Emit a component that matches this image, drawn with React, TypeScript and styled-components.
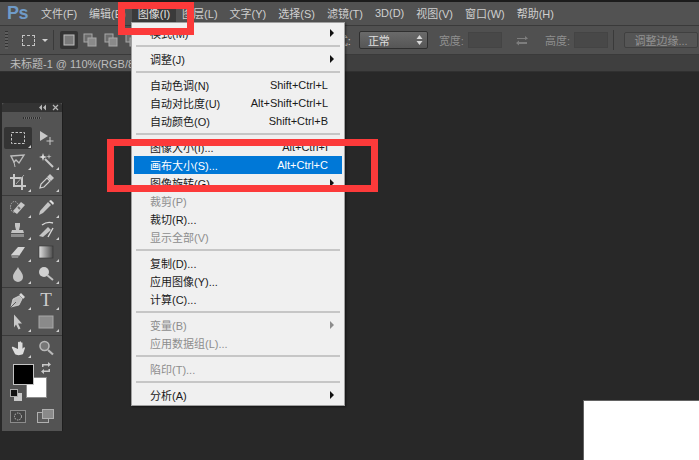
import React from 'react';
import styled, { createGlobalStyle } from 'styled-components';

const UI_FONT = `"Liberation Sans", "Noto Sans CJK SC", sans-serif`;

const GlobalStyle = createGlobalStyle`
  html, body {
    margin: 0;
    padding: 0;
    background: #282828;
  }
  * {
    box-sizing: border-box;
  }
`;

const menuBarItems = [
  { label: '文件(F)' },
  { label: '编辑(E)' },
  { label: '图像(I)', active: true },
  { label: '图层(L)' },
  { label: '文字(Y)' },
  { label: '选择(S)' },
  { label: '滤镜(T)' },
  { label: '3D(D)' },
  { label: '视图(V)' },
  { label: '窗口(W)' },
  { label: '帮助(H)' },
];

type Item = {
  label: string;
  shortcut?: string;
  submenu?: boolean;
  disabled?: boolean;
  selected?: boolean;
};

const menuSections: Item[][] = [
  [{ label: '模式(M)', submenu: true }],
  [{ label: '调整(J)', submenu: true }],
  [
    { label: '自动色调(N)', shortcut: 'Shift+Ctrl+L' },
    { label: '自动对比度(U)', shortcut: 'Alt+Shift+Ctrl+L' },
    { label: '自动颜色(O)', shortcut: 'Shift+Ctrl+B' },
  ],
  [
    { label: '图像大小(I)...', shortcut: 'Alt+Ctrl+I' },
    { label: '画布大小(S)...', shortcut: 'Alt+Ctrl+C', selected: true },
    { label: '图像旋转(G)', submenu: true },
    { label: '裁剪(P)', disabled: true },
    { label: '裁切(R)...' },
    { label: '显示全部(V)', disabled: true },
  ],
  [{ label: '复制(D)...' }, { label: '应用图像(Y)...' }, { label: '计算(C)...' }],
  [
    { label: '变量(B)', submenu: true, disabled: true },
    { label: '应用数据组(L)...', disabled: true },
  ],
  [{ label: '陷印(T)...', disabled: true }],
  [{ label: '分析(A)', submenu: true }],
];

const Icon = ({ children, size = 18 }: { children: React.ReactNode; size?: number }) => (
  <svg width={size} height={size} viewBox="0 0 18 18" fill="none">
    {children}
  </svg>
);

const toolGroups: { id: string; corner?: boolean; active?: boolean; icon: React.ReactNode }[][] = [
  [
    {
      id: 'marquee',
      corner: true,
      active: true,
      icon: (
        <Icon>
          <rect x="2.5" y="3.5" width="13" height="11" stroke="#c4c4c4" strokeDasharray="2.5 1.5" />
        </Icon>
      ),
    },
    {
      id: 'move',
      icon: (
        <Icon>
          <path d="M3 2l8 5-8 5z" fill="#c8c8c8" />
          <path d="M13 8v8M9.5 12h7" stroke="#c8c8c8" />
        </Icon>
      ),
    },
    {
      id: 'lasso',
      corner: true,
      icon: (
        <Icon>
          <path d="M2 5l13-1-5 8-3-3-2 2z" stroke="#bdbdbd" strokeWidth="1.4" />
          <path d="M5 11l1 5" stroke="#bdbdbd" />
        </Icon>
      ),
    },
    {
      id: 'wand',
      corner: true,
      icon: (
        <Icon>
          <path d="M8 8l8 8" stroke="#c8c8c8" strokeWidth="2" />
          <path d="M6 2l1 3 3 1-3 1-1 3-1-3-3-1 3-1z" fill="#dcdcdc" />
          <path d="M12 3l.6 2 2 .6-2 .6-.6 2-.6-2-2-.6 2-.6z" fill="#b8b8b8" />
        </Icon>
      ),
    },
    {
      id: 'crop',
      corner: true,
      icon: (
        <Icon>
          <path d="M5 1v12h12M1 5h12v12" stroke="#c8c8c8" strokeWidth="2" />
          <path d="M7 11l8-9" stroke="#a8a8a8" />
        </Icon>
      ),
    },
    {
      id: 'eyedropper',
      corner: true,
      icon: (
        <Icon>
          <path d="M3 15l1-4 6-6 3 3-6 6z" stroke="#d0d0d0" strokeWidth="1.2" />
          <path d="M10 4l3-3 4 4-3 3z" fill="#c8c8c8" />
        </Icon>
      ),
    },
  ],
  [
    {
      id: 'heal',
      corner: true,
      icon: (
        <Icon>
          <ellipse cx="5.5" cy="8" rx="4" ry="5.5" stroke="#b0b0b0" strokeDasharray="1.5 1" />
          <path d="M4 12l8-9 4 3-8 9z" fill="#c8c8c8" />
          <path d="M9 8l2 2" stroke="#6e6e6e" strokeWidth="2" />
        </Icon>
      ),
    },
    {
      id: 'brush',
      corner: true,
      icon: (
        <Icon>
          <path d="M2 16l1-4 8-9 3 3-8 8z" fill="#c4c4c4" />
          <path d="M12 2l2-1 3 3-1 2z" fill="#e0e0e0" />
        </Icon>
      ),
    },
    {
      id: 'stamp',
      corner: true,
      icon: (
        <Icon>
          <path d="M6 2h5v3l-1 4h4l1 3H2l1-3h4l-1-4z" fill="#c4c4c4" />
          <rect x="2" y="13" width="13" height="3" fill="#8e8e8e" />
        </Icon>
      ),
    },
    {
      id: 'history',
      corner: true,
      icon: (
        <Icon>
          <path d="M2 15l9-9 3 3-8 7z" fill="#c4c4c4" />
          <path d="M5 4c4-3 8-3 11-2M16 7l-5 9" stroke="#d8d8d8" strokeWidth="1.4" />
        </Icon>
      ),
    },
    {
      id: 'eraser',
      corner: true,
      icon: (
        <Icon>
          <path d="M2 12l7-8h7l-6 9H3z" fill="#d4d4d4" />
          <path d="M2 12h8l-1 3H3z" fill="#8c8c8c" />
        </Icon>
      ),
    },
    {
      id: 'gradient',
      corner: true,
      icon: (
        <Icon>
          <defs>
            <linearGradient id="grad-tool" x1="0" x2="1" y1="0" y2="0">
              <stop offset="0" stopColor="#e0e0e0" />
              <stop offset="1" stopColor="#4a4a4a" />
            </linearGradient>
          </defs>
          <rect x="2" y="3" width="14" height="12" fill="url(#grad-tool)" stroke="#333" strokeWidth="0.6" />
        </Icon>
      ),
    },
    {
      id: 'blur',
      corner: true,
      icon: (
        <Icon>
          <path d="M9 2c2 4 5 6 5 10a5 5 0 0 1-10 0c0-4 3-6 5-10z" fill="#c4c4c4" />
        </Icon>
      ),
    },
    {
      id: 'dodge',
      corner: true,
      icon: (
        <Icon>
          <circle cx="7" cy="7" r="5" fill="#d0d0d0" />
          <path d="M10 10l6 5" stroke="#c0c0c0" strokeWidth="2" />
        </Icon>
      ),
    },
  ],
  [
    {
      id: 'pen',
      corner: true,
      icon: (
        <Icon>
          <path d="M2 16l2-8 6-3 3 3-3 6z" fill="#bcbcbc" stroke="#e4e4e4" strokeWidth="0.7" />
          <path d="M10 4l2-2 4 4-2 2z" fill="#d8d8d8" />
          <path d="M2 16l5-5" stroke="#5c5c5c" />
        </Icon>
      ),
    },
    { id: 'type', corner: true, icon: null },
    {
      id: 'select',
      corner: true,
      icon: (
        <Icon>
          <path d="M5 1.5l8 9H9l2.5 5-2 1-2.5-5-2 3z" fill="#c8c8c8" />
        </Icon>
      ),
    },
    {
      id: 'shape',
      corner: true,
      icon: (
        <Icon>
          <rect x="2" y="3" width="14" height="12" fill="#8a8a8a" stroke="#a8a8a8" />
        </Icon>
      ),
    },
  ],
  [
    {
      id: 'hand',
      corner: true,
      icon: (
        <Icon>
          <path
            d="M3 9l3 6c1 1.500 6 1.500 8 0l2-6c0-1-1-1-2 0l-.5 1V4c0-1-1.500-1-1.500 0v4V3c0-1-1.500-1-1.500 0v5V3.500c0-1-1.500-1-1.500 0V10L4.500 8C3.500 7.500 2.500 8 3 9z"
            fill="#dcdcdc"
          />
        </Icon>
      ),
    },
    {
      id: 'zoom',
      icon: (
        <Icon>
          <circle cx="7.500" cy="7" r="4.500" fill="#777" stroke="#b8b8b8" strokeWidth="1.6" />
          <path d="M11 11l5 4.500" stroke="#b8b8b8" strokeWidth="2.200" />
        </Icon>
      ),
    },
  ],
];

const App = () => (
  <>
    <GlobalStyle />
    <Window>
      <TopEdge />
      <MenuBar>
        <Logo>Ps</Logo>
        {menuBarItems.map((item) => (
          <MenuBarItem key={item.label} $active={item.active}>
            {item.label}
          </MenuBarItem>
        ))}
      </MenuBar>

      <OptionsBar>
        <Grip />
        <MarqueePreset />
        <PresetArrow />
        <OptionDivider />
        <ModeGroup>
          <ModeButton $active>
            <svg width="12" height="12" viewBox="0 0 12 12">
              <rect x="1" y="1" width="10" height="10" fill="#7a7a7a" stroke="#c0c0c0" />
            </svg>
          </ModeButton>
          {[0, 1, 2].map((i) => (
            <ModeButton key={i}>
              <svg width="14" height="14" viewBox="0 0 14 14">
                <rect x="1" y="1" width="8" height="8" fill="#6c6c6c" stroke="#a8a8a8" />
                <rect x="5" y="5" width="8" height="8" fill="#8a8a8a" stroke="#a8a8a8" />
              </svg>
            </ModeButton>
          ))}
        </ModeGroup>
        <OptionsRight>
          <OptionLabel>样式:</OptionLabel>
          <StyleSelect>
            正常
            <svg width="7" height="12" viewBox="0 0 7 12">
              <path d="M3.500 1l3 4h-6zM3.500 11l3-4h-6z" fill="#d8d8d8" />
            </svg>
          </StyleSelect>
          <DimLabel>宽度:</DimLabel>
          <DimInput />
          <SwapIcon viewBox="0 0 14 12" width="14" height="12">
            <path d="M2 4h8V2l3 2.500L10 6V5H2zM12 8H4V6.500L1 9l3 2.500V10h8z" fill="#7d7d7d" />
          </SwapIcon>
          <DimLabel>高度:</DimLabel>
          <DimInput />
          <OptionDivider />
          <RefineButton>调整边缘...</RefineButton>
        </OptionsRight>
      </OptionsBar>

      <TabBar>
        <DocTab>未标题-1 @ 110%(RGB/8)</DocTab>
      </TabBar>

      <Workspace>
        <Canvas />
        <ToolPanel>
          <PanelHeader>
            <svg width="20" height="7" viewBox="0 0 20 7">
              <path d="M3 0.500L0 3.500l3 3zM7 0.500L4 3.500l3 3z" fill="#b8b8b8" />
              <path d="M14 1l5 5M19 1l-5 5" stroke="#b8b8b8" strokeWidth="1.200" />
            </svg>
          </PanelHeader>
          <PanelGrip />
          {toolGroups.map((group, index) => (
            <ToolGroup key={index} $first={index === 0}>
              {group.map((tool) => (
                <ToolButton key={tool.id} $active={tool.active} $corner={tool.corner}>
                  {tool.id === 'type' ? <TypeGlyph>T</TypeGlyph> : tool.icon}
                </ToolButton>
              ))}
            </ToolGroup>
          ))}
          <Swatches>
            <SwapColors viewBox="0 0 12 12" width="12" height="12">
              <path d="M2 5V2h6V0l3 2.500L8 5V3.500H3.500V5zM10 7v3H4v2L1 9.500 4 7v1.500h4.500V7z" fill="#c8c8c8" />
            </SwapColors>
            <Background />
            <Foreground />
            <DefaultColors>
              <svg width="12" height="12" viewBox="0 0 12 12">
                <rect x="4" y="4" width="8" height="8" fill="#c8c8c8" />
                <rect x="0.500" y="0.500" width="7" height="7" fill="#111" stroke="#aaa" />
              </svg>
            </DefaultColors>
          </Swatches>
          <PanelFooter>
            <svg width="16" height="13" viewBox="0 0 16 13">
              <rect x="0.500" y="0.500" width="15" height="12" fill="#454545" stroke="#8c8c8c" />
              <circle cx="8" cy="6.500" r="3.500" fill="none" stroke="#c0c0c0" strokeDasharray="1.500 1" />
            </svg>
            <svg width="17" height="14" viewBox="0 0 17 14">
              <rect x="0.500" y="3.500" width="11" height="10" fill="#5c5c5c" stroke="#b0b0b0" />
              <rect x="5.500" y="0.500" width="11" height="9" fill="#8a8a8a" stroke="#b0b0b0" />
            </svg>
          </PanelFooter>
        </ToolPanel>
      </Workspace>

      <ImageMenu>
        {menuSections.map((section, index) => (
          <MenuSection key={index} $last={index === menuSections.length - 1}>
            {section.map((item) => (
              <MenuRow key={item.label} $disabled={item.disabled} $selected={item.selected}>
                <span>{item.label}</span>
                {item.shortcut && <span>{item.shortcut}</span>}
                {item.submenu && <SubmenuArrow $disabled={item.disabled} />}
              </MenuRow>
            ))}
          </MenuSection>
        ))}
      </ImageMenu>

      <Highlight $left={118} $top={2} $width={76} $height={33} />
      <Highlight $left={107} $top={139} $width={271} $height={53} />
    </Window>
  </>
);

const Window = styled.div`
  position: relative;
  width: 699px;
  height: 460px;
  overflow: hidden;
  display: flex;
  flex-direction: column;
  background: #282828;
  font-family: ${UI_FONT};
  font-size: 11px;
`;

const TopEdge = styled.div`
  height: 2px;
  background: #1c1c1c;
`;

const MenuBar = styled.div`
  height: 24px;
  display: flex;
  align-items: center;
  padding-left: 7px;
  background: #525252;
  border-bottom: 1px solid #3a3a3a;
`;

const Logo = styled.div`
  width: 28px;
  font-size: 18px;
  font-weight: 700;
  letter-spacing: -0.5px;
  color: #6f9bc8;
`;

const MenuBarItem = styled.div<{ $active?: boolean }>`
  height: 100%;
  display: flex;
  align-items: center;
  padding: 0 6px 2px;
  color: ${({ $active }) => ($active ? '#e0e0e0' : '#cfcfcf')};
  background: ${({ $active }) => ($active ? '#3a3a3a' : 'transparent')};
  white-space: nowrap;
`;

const OptionsBar = styled.div`
  height: 29px;
  display: flex;
  align-items: center;
  padding-left: 5px;
  background: #505050;
  border-bottom: 1px solid #3a3a3a;
`;

const Grip = styled.div`
  width: 3px;
  height: 18px;
  background: repeating-linear-gradient(#333 0 1px, #5e5e5e 1px 3px);
`;

const MarqueePreset = styled.div`
  width: 13px;
  height: 11px;
  margin-left: 14px;
  border: 1px dashed #c4c4c4;
`;

const PresetArrow = styled.div`
  margin-left: 7px;
  border-left: 3px solid transparent;
  border-right: 3px solid transparent;
  border-top: 3px solid #d0d0d0;
`;

const OptionDivider = styled.div`
  width: 1px;
  height: 20px;
  margin-left: 5px;
  background: #3a3a3a;
`;

const ModeGroup = styled.div`
  display: flex;
  gap: 3px;
  margin-left: 6px;
`;

const ModeButton = styled.div<{ $active?: boolean }>`
  width: 18px;
  height: 18px;
  display: flex;
  align-items: center;
  justify-content: center;
  border-radius: 2px;
  background: ${({ $active }) => ($active ? '#343434' : 'transparent')};
`;

const OptionsRight = styled.div`
  display: flex;
  align-items: center;
  margin-left: auto;
  padding-right: 1px;
`;

const OptionLabel = styled.span`
  color: #c8c8c8;
  margin-right: 8px;
`;

const StyleSelect = styled.div`
  width: 69px;
  height: 18px;
  display: flex;
  align-items: center;
  justify-content: space-between;
  padding: 0 4px 0 8px;
  color: #e0e0e0;
  background: linear-gradient(#6a6a6a, #565656);
  border: 1px solid #2f2f2f;
  border-radius: 2px;
`;

const DimLabel = styled.span`
  margin-left: 11px;
  color: #8f8f8f;
  white-space: nowrap;
`;

const DimInput = styled.div`
  width: 34px;
  height: 16px;
  margin-left: 4px;
  background: #484848;
  border: 1px solid #444;
`;

const SwapIcon = styled.svg`
  margin-left: 13px;
  margin-right: 5px;
`;

const RefineButton = styled.div`
  width: 74px;
  height: 16px;
  margin-left: 10px;
  display: flex;
  align-items: center;
  justify-content: center;
  color: #939393;
  background: #555;
  border: 1px solid #404040;
  border-radius: 2px;
  white-space: nowrap;
`;

const TabBar = styled.div`
  height: 17px;
  background: #3f3f3f;
  border-bottom: 1px solid #303030;
`;

const DocTab = styled.div`
  width: fit-content;
  height: 100%;
  padding: 2px 12px 0 10px;
  line-height: 14px;
  color: #bdbdbd;
  background: #505050;
  white-space: nowrap;
`;

const Workspace = styled.div`
  position: relative;
  flex: 1;
  background: #282828;
`;

const Canvas = styled.div`
  position: absolute;
  left: 583px;
  right: 0;
  top: 328px;
  bottom: 0;
  background: #fff;
  border-left: 1px solid #636363;
  border-top: 1px solid #636363;
`;

const ToolPanel = styled.div`
  position: absolute;
  left: 2px;
  top: 31px;
  width: 60px;
  height: 328px;
  background: #535353;
  box-shadow: 1px 0 0 #1e1e1e;
`;

const PanelHeader = styled.div`
  height: 9px;
  display: flex;
  align-items: center;
  justify-content: flex-end;
  padding-right: 3px;
  background: #333;
  border-radius: 3px 3px 0 0;
`;

const PanelGrip = styled.div`
  width: 18px;
  height: 2px;
  margin: 5px auto 0;
  background: repeating-linear-gradient(90deg, #2e2e2e 0 1px, #6a6a6a 1px 2px);
`;

const ToolGroup = styled.div<{ $first?: boolean }>`
  display: grid;
  grid-template-columns: 28px 28px;
  grid-auto-rows: 22px;
  justify-content: center;
  margin-top: ${({ $first }) => ($first ? '8px' : '0')};
  padding-bottom: 2px;
  margin-bottom: 1px;
  border-bottom: 1px solid #3a3a3a;
  &:nth-of-type(6) {
    border-bottom: none;
  }
`;

const ToolButton = styled.div<{ $active?: boolean; $corner?: boolean }>`
  position: relative;
  display: flex;
  align-items: center;
  justify-content: center;
  border-radius: 2px;
  background: ${({ $active }) => ($active ? '#343434' : 'transparent')};
  &::after {
    content: '';
    display: ${({ $corner }) => ($corner ? 'block' : 'none')};
    position: absolute;
    right: 1px;
    bottom: 1px;
    border-left: 3px solid transparent;
    border-bottom: 3px solid #d0d0d0;
  }
`;

const TypeGlyph = styled.span`
  font-family: "Liberation Serif", serif;
  font-size: 19px;
  color: #cdcdcd;
`;

const Swatches = styled.div`
  position: relative;
  height: 40px;
`;

const Foreground = styled.div`
  position: absolute;
  left: 11px;
  top: 2px;
  width: 21px;
  height: 21px;
  background: #000;
  border: 1px solid #c4c4c4;
`;

const Background = styled.div`
  position: absolute;
  left: 24px;
  top: 15px;
  width: 21px;
  height: 21px;
  background: #fff;
  border: 1px solid #8c8c8c;
`;

const SwapColors = styled.svg`
  position: absolute;
  left: 38px;
  top: 0;
`;

const DefaultColors = styled.div`
  position: absolute;
  left: 8px;
  top: 27px;
  line-height: 0;
`;

const PanelFooter = styled.div`
  display: flex;
  justify-content: space-between;
  align-items: center;
  padding: 7px 8px 0;
`;

const ImageMenu = styled.div`
  position: absolute;
  left: 131px;
  top: 22px;
  width: 214px;
  height: 384px;
  padding: 1px 2px;
  background: #f0f0f0;
  border: 1px solid #a0a0a0;
  box-shadow: 1px 1px 2px rgba(0, 0, 0, 0.5);
`;

const MenuSection = styled.div<{ $last?: boolean }>`
  position: relative;
  padding-bottom: ${({ $last }) => ($last ? '0' : '8px')};
  &::after {
    content: '';
    display: ${({ $last }) => ($last ? 'none' : 'block')};
    position: absolute;
    left: 2px;
    right: 2px;
    bottom: 3px;
    height: 2px;
    background: #c6c6c6;
  }
`;

const MenuRow = styled.div<{ $disabled?: boolean; $selected?: boolean }>`
  position: relative;
  height: 18px;
  display: flex;
  align-items: center;
  justify-content: space-between;
  padding: 0 14px 0 16px;
  white-space: nowrap;
  color: ${({ $disabled, $selected }) =>
    $selected ? '#fff' : $disabled ? '#8d8d8d' : '#1a1a1a'};
  background: ${({ $selected }) => ($selected ? '#0078d7' : 'transparent')};
`;

const SubmenuArrow = styled.span<{ $disabled?: boolean }>`
  position: absolute;
  right: 8px;
  top: 5px;
  border-top: 4px solid transparent;
  border-bottom: 4px solid transparent;
  border-left: 4px solid ${({ $disabled }) => ($disabled ? '#8d8d8d' : '#111')};
`;

const Highlight = styled.div<{ $left: number; $top: number; $width: number; $height: number }>`
  position: absolute;
  left: ${({ $left }) => $left}px;
  top: ${({ $top }) => $top}px;
  width: ${({ $width }) => $width}px;
  height: ${({ $height }) => $height}px;
  border: 7px solid #fc3a3a;
`;

export default App;
